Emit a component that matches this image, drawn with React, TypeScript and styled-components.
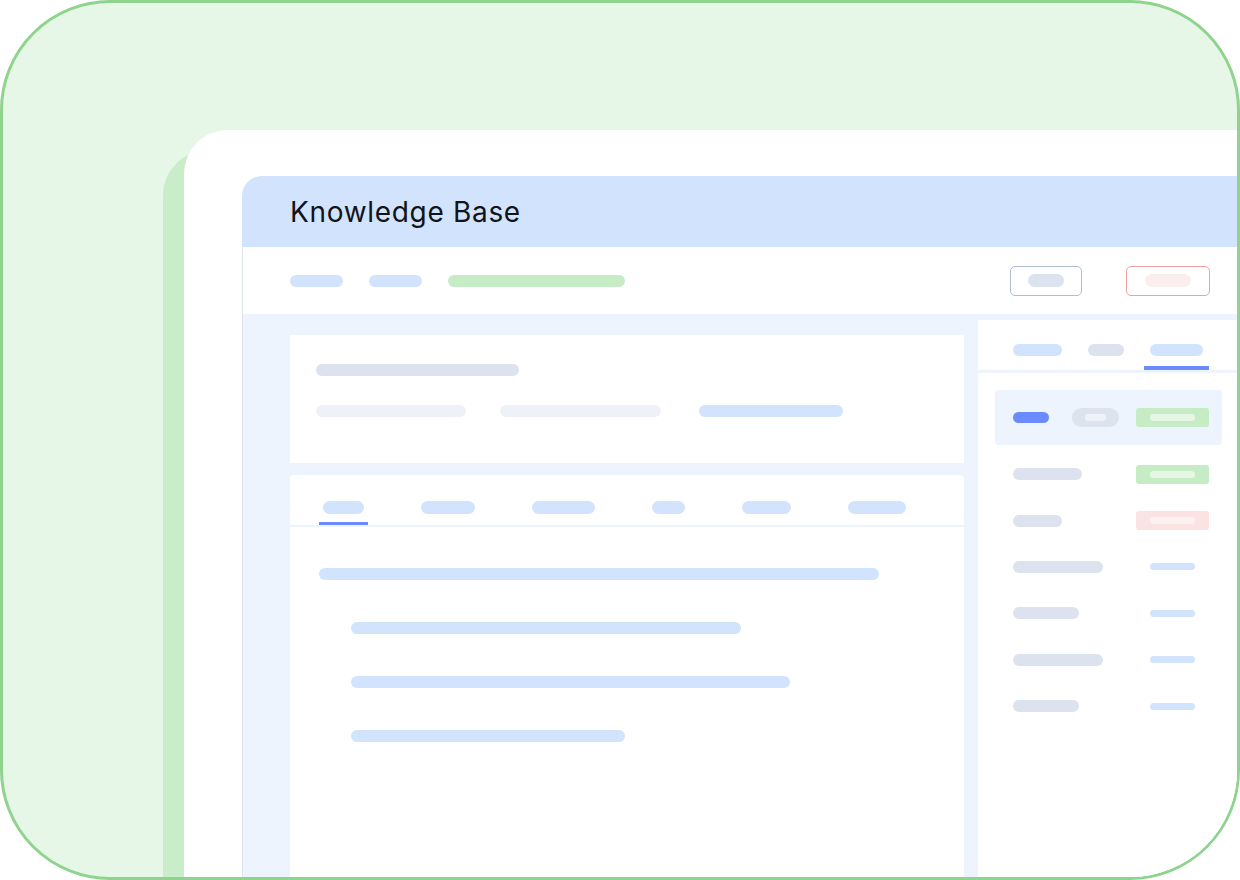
import styled, { createGlobalStyle } from "styled-components";

const GlobalStyle = createGlobalStyle`
  body {
    margin: 0;
    font-family: Inter, "Noto Sans", sans-serif;
  }
`;

const Frame = styled.div`
  width: 1240px;
  height: 880px;
  box-sizing: border-box;
  border: 3px solid #8ed48e;
  border-radius: 110px;
  background: #e7f7e7;
  overflow: hidden;
  padding: 127px 0 0 181px;
  display: flex;
`;

const Card = styled.div`
  flex: 1;
  display: flex;
  background: #ffffff;
  border-radius: 44px 0 0 0;
  box-shadow: -21px 21px 0 #c8edc8;
  padding: 46px 0 0 58px;
`;

const Window = styled.div`
  flex: 1;
  display: flex;
  flex-direction: column;
  border-radius: 20px 0 0 0;
  overflow: hidden;
`;

const Header = styled.div`
  height: 71px;
  flex-shrink: 0;
  display: flex;
  align-items: center;
  padding-left: 48px;
  background: #d1e3fd;
  font-size: 28px;
  color: #111418;
  letter-spacing: 0.68px;
`;

const Lower = styled.div`
  flex: 1;
  display: flex;
  flex-direction: column;
  border-left: 1.5px solid #dde4ef;
`;

const Toolbar = styled.div`
  height: 67px;
  flex-shrink: 0;
  display: flex;
  align-items: center;
  gap: 26px;
  padding: 0 27px 0 47px;
  background: #ffffff;
`;

const Pill = styled.div<{ w: number; h?: number; c: string }>`
  width: ${(p) => p.w}px;
  height: ${(p) => p.h ?? 12}px;
  border-radius: 7px;
  background: ${(p) => p.c};
  flex-shrink: 0;
`;

const Spacer = styled.div`
  flex: 1;
`;

const OutlineButton = styled.div<{ w: number; border: string }>`
  width: ${(p) => p.w}px;
  height: 30px;
  box-sizing: border-box;
  border: 1.7px solid ${(p) => p.border};
  border-radius: 5px;
  display: flex;
  align-items: center;
  justify-content: center;
  margin-left: 18px;
`;

const Content = styled.div`
  flex: 1;
  display: flex;
  gap: 14px;
  padding-left: 47px;
  background: #edf4fe;
`;

const MainColumn = styled.div`
  width: 674px;
  display: flex;
  flex-direction: column;
  gap: 12px;
  padding-top: 21px;
`;

const Summary = styled.div`
  height: 128px;
  box-sizing: border-box;
  background: #ffffff;
  padding: 29px 26px;
  display: flex;
  flex-direction: column;
  gap: 29px;
`;

const SummaryRow = styled.div`
  display: flex;
  gap: 34px;
`;

const TabCard = styled.div`
  flex: 1;
  background: #ffffff;
  border-radius: 4px 4px 0 0;
`;

const TabBar = styled.div<{ pad: number; gap: number; line: number }>`
  display: flex;
  align-items: flex-end;
  gap: ${(p) => p.gap}px;
  padding-left: ${(p) => p.pad}px;
  border-bottom: ${(p) => p.line}px solid #edf4fe;
`;

const Tab = styled.div<{ active?: boolean; top: number; bottom: number; side: number; bar: number }>`
  padding: ${(p) => p.top}px ${(p) => p.side}px ${(p) => p.bottom}px;
  border-bottom: ${(p) => p.bar}px solid ${(p) => (p.active ? "#6b8afd" : "transparent")};
`;

const Lines = styled.div`
  display: flex;
  flex-direction: column;
  gap: 42px;
  padding: 41px 0 0 29px;
`;

const Line = styled(Pill)<{ indent?: boolean }>`
  margin-left: ${(p) => (p.indent ? 32 : 0)}px;
`;

const SidePanel = styled.div`
  flex: 1;
  margin-top: 6px;
  background: #ffffff;
`;

const List = styled.div`
  padding: 17px 0 0 17px;
  width: 227px;
`;

const ActiveRow = styled.div`
  height: 55px;
  display: flex;
  align-items: center;
  padding: 0 13px 0 18px;
  border-radius: 4px;
  background: #edf4fe;
`;

const Row = styled.div`
  height: 46.4px;
  display: flex;
  align-items: center;
  justify-content: space-between;
  padding: 0 13px 0 18px;
`;

const Rows = styled.div`
  padding-top: 6px;
`;

const Capsule = styled.div`
  width: 47px;
  height: 19px;
  border-radius: 10px;
  background: #dce3ef;
  display: flex;
  align-items: center;
  justify-content: center;
  margin: 0 17px 0 23px;
`;

const Badge = styled.div<{ c: string }>`
  width: 73px;
  height: 19px;
  border-radius: 3px;
  background: ${(p) => p.c};
  display: flex;
  align-items: center;
  justify-content: center;
`;

const Slot = styled.div`
  width: 73px;
  display: flex;
  justify-content: center;
`;

const blue = "#d1e3fd";
const grey = "#dce3ef";
const pale = "#eef2f8";
const accent = "#6b8afd";

const mainTabs = [41, 54, 63, 33, 49, 58];
const contentLines = [
  { w: 560, indent: false },
  { w: 390, indent: true },
  { w: 439, indent: true },
  { w: 274, indent: true },
];

const sideRows = [
  { w: 69, kind: "green" },
  { w: 49, kind: "red" },
  { w: 90, kind: "line" },
  { w: 66, kind: "line" },
  { w: 90, kind: "line" },
  { w: 66, kind: "line" },
];

const RowEnd = ({ kind }: { kind: string }) => {
  if (kind === "green")
    return (
      <Badge c="#c6ecc6">
        <Pill w={45} h={7} c="#e6f7e6" />
      </Badge>
    );
  if (kind === "red")
    return (
      <Badge c="#fbe3e3">
        <Pill w={45} h={7} c="#fbf1f1" />
      </Badge>
    );
  return (
    <Slot>
      <Pill w={45} h={7} c={blue} />
    </Slot>
  );
};

const App = () => {
  return (
    <>
      <GlobalStyle />
      <Frame>
        <Card>
          <Window>
            <Header>Knowledge Base</Header>
            <Lower>
              <Toolbar>
                <Pill w={53} c={blue} />
                <Pill w={53} c={blue} />
                <Pill w={177} c="#c6ecc6" />
                <Spacer />
                <OutlineButton w={72} border="#b0bcd3">
                  <Pill w={36} h={13} c={grey} />
                </OutlineButton>
                <OutlineButton w={84} border="#f0a0a0">
                  <Pill w={46} h={13} c="#fbeeee" />
                </OutlineButton>
              </Toolbar>
              <Content>
                <MainColumn>
                  <Summary>
                    <Pill w={203} c={grey} />
                    <SummaryRow>
                      <Pill w={150} c={pale} />
                      <Pill w={161} c={pale} />
                      <Pill w={144} c={blue} style={{ marginLeft: 4 }} />
                    </SummaryRow>
                  </Summary>
                  <TabCard>
                    <TabBar pad={29} gap={49} line={2}>
                      {mainTabs.map((w, i) => (
                        <Tab key={i} active={i === 0} top={26} bottom={8} side={4} bar={3}>
                          <Pill w={w} h={13} c={blue} />
                        </Tab>
                      ))}
                    </TabBar>
                    <Lines>
                      {contentLines.map((l, i) => (
                        <Line key={i} w={l.w} c={blue} indent={l.indent} />
                      ))}
                    </Lines>
                  </TabCard>
                </MainColumn>
                <SidePanel>
                  <TabBar pad={29} gap={14} line={3}>
                    <Tab top={24} bottom={10} side={6} bar={4}>
                      <Pill w={49} c={blue} />
                    </Tab>
                    <Tab top={24} bottom={10} side={6} bar={4}>
                      <Pill w={36} c={grey} />
                    </Tab>
                    <Tab active top={24} bottom={10} side={6} bar={4}>
                      <Pill w={53} c={blue} />
                    </Tab>
                  </TabBar>
                  <List>
                    <ActiveRow>
                      <Pill w={36} h={11} c={accent} />
                      <Capsule>
                        <Pill w={21} h={7} c={pale} />
                      </Capsule>
                      <Badge c="#c6ecc6">
                        <Pill w={45} h={7} c="#e6f7e6" />
                      </Badge>
                    </ActiveRow>
                    <Rows>
                      {sideRows.map((r, i) => (
                        <Row key={i}>
                          <Pill w={r.w} c={grey} />
                          <RowEnd kind={r.kind} />
                        </Row>
                      ))}
                    </Rows>
                  </List>
                </SidePanel>
              </Content>
            </Lower>
          </Window>
        </Card>
      </Frame>
    </>
  );
};

export default App;
